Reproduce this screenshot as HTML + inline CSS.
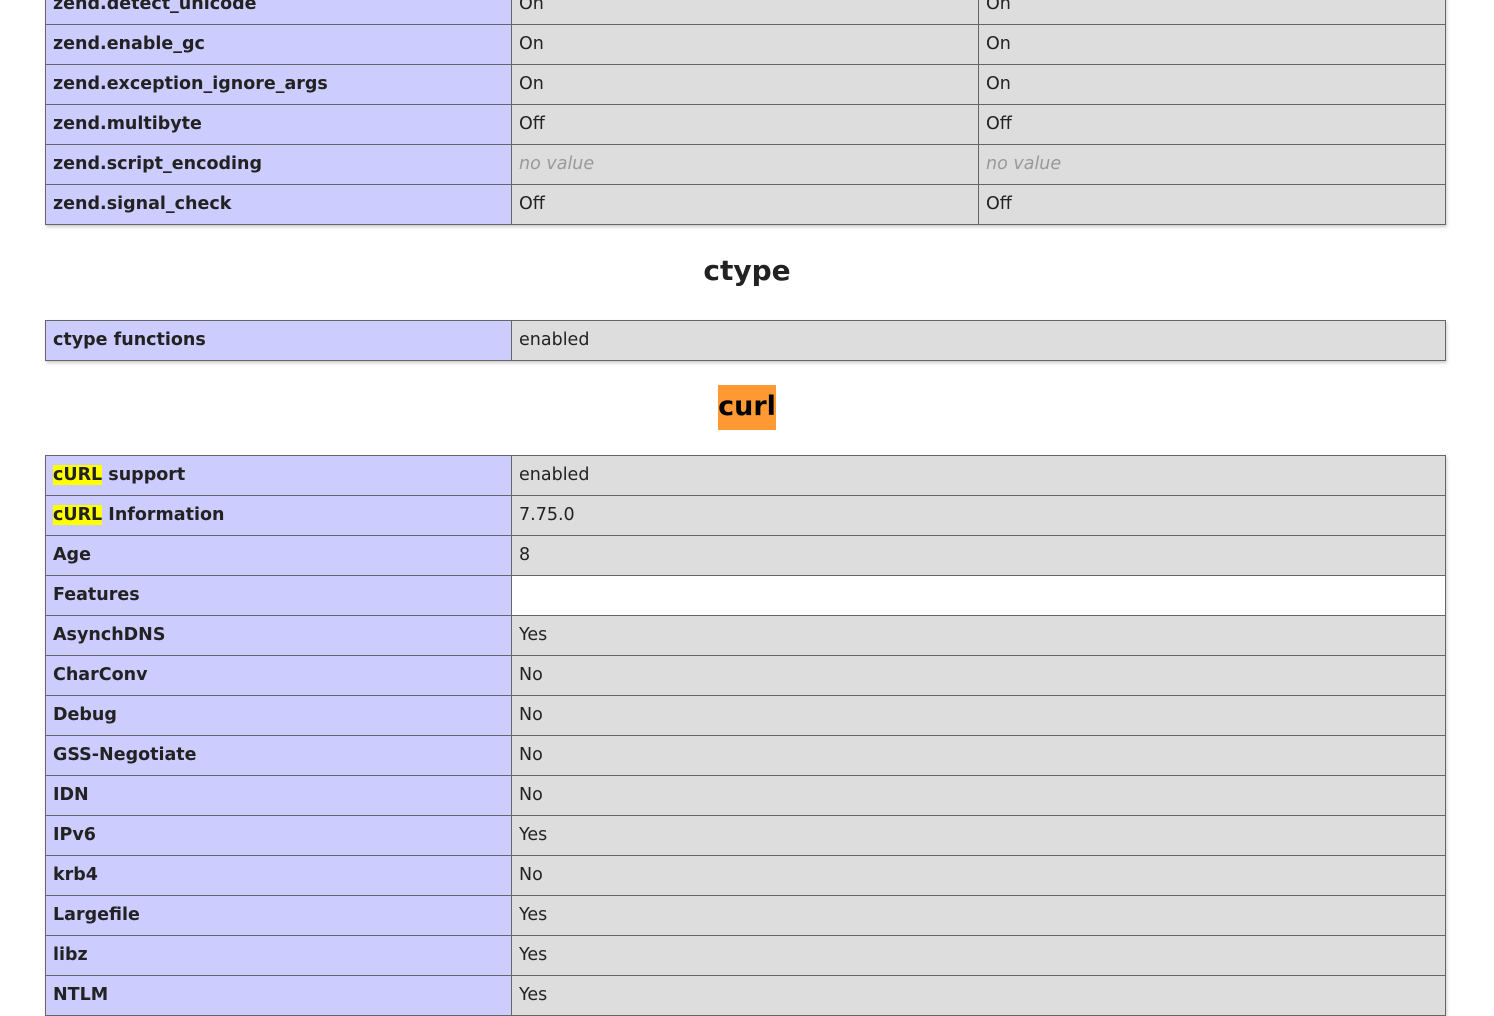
<!DOCTYPE html>
<html><head><meta charset="utf-8"><style>
body{margin:0;background:#fff;font-family:"DejaVu Sans","Liberation Sans",sans-serif;color:#222;width:1494px;height:970px;overflow:hidden;position:relative}
.t{position:absolute;left:45px;width:1399px;border:1px solid #666;box-shadow:1px 2px 3px #ccc}
.r{display:flex;height:39px;border-top:1px solid #666}
.r:first-child{border-top:none}
.c{box-sizing:border-box;padding-left:7px;line-height:39px;font-size:17.5px;white-space:nowrap;overflow:hidden}
.k{width:465px;background:#ccf;font-weight:bold;color:#222}
.v{background:#ddd;border-left:1px solid #666;flex:1}
.v3{width:467px;flex:none}
.nv{color:#999;font-style:italic}
.w{background:#fff}
h2{position:absolute;left:0;width:1494px;text-align:center;margin:0;font-size:28px;font-weight:bold;color:#222}
.hl{background:#ff0}
</style></head><body>
<div class="t" style="top:-16px">
<div class="r"><div class="c k">zend.detect_unicode</div><div class="c v v3">On</div><div class="c v">On</div></div>
<div class="r"><div class="c k">zend.enable_gc</div><div class="c v v3">On</div><div class="c v">On</div></div>
<div class="r"><div class="c k">zend.exception_ignore_args</div><div class="c v v3">On</div><div class="c v">On</div></div>
<div class="r"><div class="c k">zend.multibyte</div><div class="c v v3">Off</div><div class="c v">Off</div></div>
<div class="r"><div class="c k">zend.script_encoding</div><div class="c v v3 nv">no value</div><div class="c v nv">no value</div></div>
<div class="r"><div class="c k">zend.signal_check</div><div class="c v v3">Off</div><div class="c v">Off</div></div>
</div>
<h2 style="top:254px">ctype</h2>
<div class="t" style="top:320px">
<div class="r"><div class="c k">ctype functions</div><div class="c v">enabled</div></div>
</div>
<h2 style="top:385px"><span style="background:#f93;color:#000;display:inline-block;height:45px;line-height:43px;padding:0;font-size:27px">curl</span></h2>
<div class="t" style="top:455px">
<div class="r"><div class="c k"><span class="hl">cURL</span> support</div><div class="c v">enabled</div></div>
<div class="r"><div class="c k"><span class="hl">cURL</span> Information</div><div class="c v">7.75.0</div></div>
<div class="r"><div class="c k">Age</div><div class="c v">8</div></div>
<div class="r"><div class="c k">Features</div><div class="c v w"></div></div>
<div class="r"><div class="c k">AsynchDNS</div><div class="c v">Yes</div></div>
<div class="r"><div class="c k">CharConv</div><div class="c v">No</div></div>
<div class="r"><div class="c k">Debug</div><div class="c v">No</div></div>
<div class="r"><div class="c k">GSS-Negotiate</div><div class="c v">No</div></div>
<div class="r"><div class="c k">IDN</div><div class="c v">No</div></div>
<div class="r"><div class="c k">IPv6</div><div class="c v">Yes</div></div>
<div class="r"><div class="c k">krb4</div><div class="c v">No</div></div>
<div class="r"><div class="c k">Largefile</div><div class="c v">Yes</div></div>
<div class="r"><div class="c k">libz</div><div class="c v">Yes</div></div>
<div class="r"><div class="c k">NTLM</div><div class="c v">Yes</div></div>
</div>
</body></html>
